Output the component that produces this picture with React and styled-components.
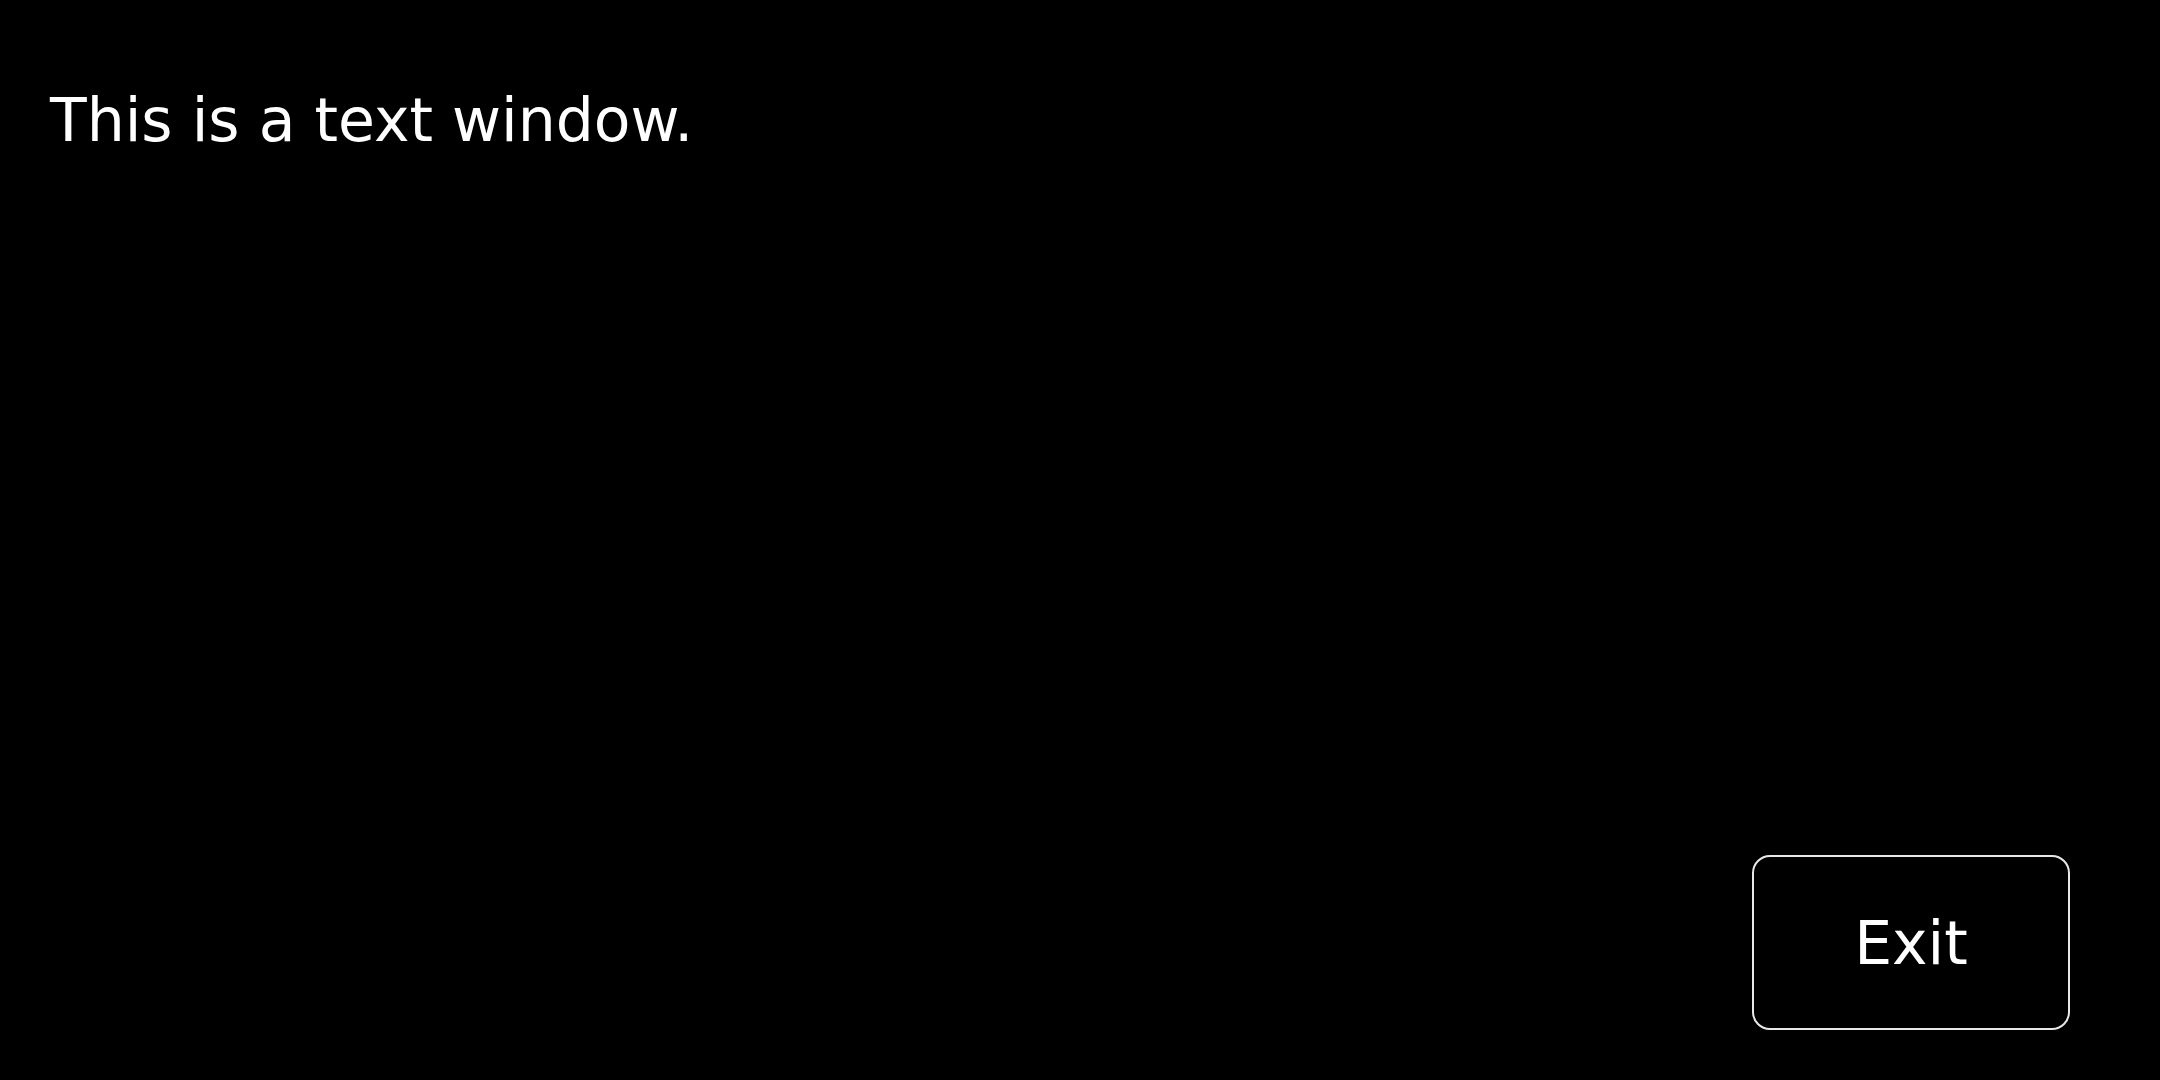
import styled, { createGlobalStyle } from "styled-components"

const GlobalStyle = createGlobalStyle`
html, body {
  margin: 0;
  padding: 0;
  background: #000;
}
#root {
  height: 100vh;
}
`

const Screen = styled.div`
height: 100vh;
box-sizing: border-box;
display: flex;
flex-direction: column;
justify-content: space-between;
padding: 85px 90px 50px 50px;
background: #000;
color: #fff;
font-family: "DejaVu Sans", sans-serif;
`

const Message = styled.p`
margin: 0;
font-size: 60px;
line-height: normal;
`

const Footer = styled.div`
display: flex;
justify-content: flex-end;
`

const ExitButton = styled.button`
width: 318px;
height: 175px;
box-sizing: border-box;
background: #000;
color: #fff;
border: 2px solid #e8e8e8;
border-radius: 18px;
font-family: "DejaVu Sans", sans-serif;
font-size: 60px;
padding: 0;
cursor: pointer;
`

const App = () => {
  return (
    <>
      <GlobalStyle />
      <Screen>
        <Message>This is a text window.</Message>
        <Footer>
          <ExitButton>Exit</ExitButton>
        </Footer>
      </Screen>
    </>
  )
}

export default App
